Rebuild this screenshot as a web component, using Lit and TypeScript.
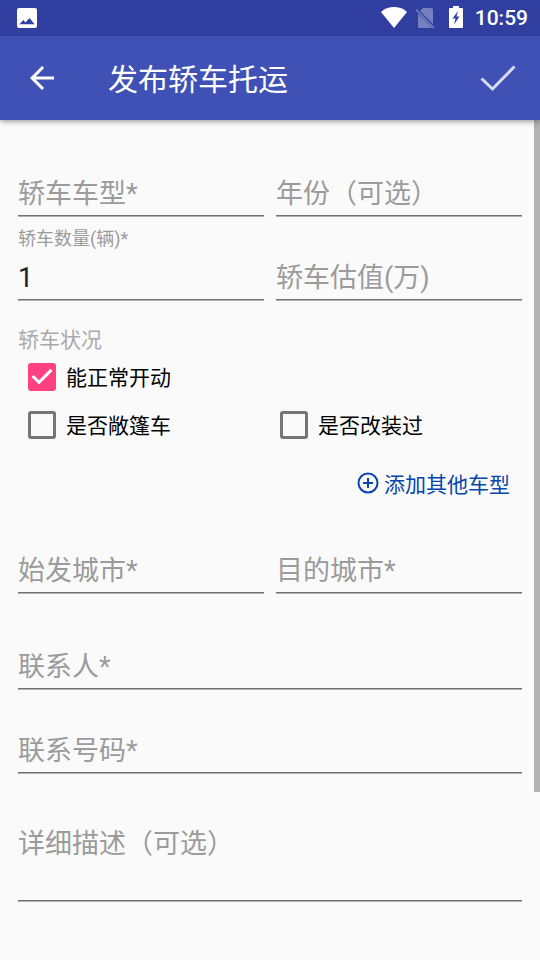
import { LitElement, html, css, svg, nothing } from "lit";
import { customElement, property, state } from "lit/decorators.js";
import { classMap } from "lit/directives/class-map.js";

@customElement("text-field")
class TextField extends LitElement {
  @property() label = "";
  @property() value = "";
  @property({ type: Boolean }) multiline = false;

  static styles = css`
    :host {
      display: block;
      min-width: 0;
    }
    .field {
      display: grid;
      grid-template-rows: 30px auto 2px;
      padding-top: 6px;
    }
    .label {
      grid-area: 2 / 1;
      z-index: 1;
      font-size: 27px;
      line-height: 50px;
      height: 46px;
      color: #9b9b9b;
      white-space: nowrap;
      pointer-events: none;
    }
    .label.multiline {
      padding-top: 18px;
      line-height: 32px;
    }
    .label.floating {
      grid-area: 1 / 1;
      height: 30px;
      font-size: 18px;
      line-height: 32px;
    }
    .control {
      grid-area: 2 / 1;
      box-sizing: border-box;
      width: 100%;
      height: 46px;
      margin: 0;
      padding: 4px 0 0;
      border: 0;
      outline: 0;
      background: none;
      font: inherit;
      font-size: 27px;
      color: #212121;
      resize: none;
    }
    .control.multiline {
      height: 90px;
      padding: 18px 0;
      line-height: 32px;
    }
    .line {
      grid-area: 3 / 1;
      background: linear-gradient(#727272 50%, #b0b0b0 50%);
    }
  `;

  private onInput(e: Event) {
    this.value = (e.target as HTMLInputElement).value;
  }

  render() {
    const cls = { multiline: this.multiline };
    return html`
      <div class="field">
        <label class=${classMap({ label: true, floating: this.value !== "", ...cls })} for="control">${this.label}</label>
        ${this.multiline
          ? html`<textarea id="control" class="control multiline" .value=${this.value} @input=${this.onInput}></textarea>`
          : html`<input id="control" class="control" type="text" .value=${this.value} @input=${this.onInput} />`}
        <div class="line"></div>
      </div>
    `;
  }
}

@customElement("check-option")
class CheckOption extends LitElement {
  @property() label = "";
  @property({ type: Boolean }) checked = false;

  static styles = css`
    .option {
      display: inline-flex;
      align-items: center;
      gap: 10px;
      height: 48px;
      padding-left: 10px;
      font-size: 21px;
      color: #000;
    }
    .mark {
      display: grid;
      place-items: center;
    }
    .box {
      grid-area: 1 / 1;
      appearance: none;
      box-sizing: border-box;
      width: 28px;
      height: 28px;
      margin: 0;
      border: 3px solid #757575;
      border-radius: 3px;
    }
    .box:checked {
      border-color: #ff4081;
      background: #ff4081;
    }
    .tick {
      grid-area: 1 / 1;
      width: 36px;
      height: 36px;
      margin: -4px;
      fill: #fff;
      pointer-events: none;
    }
    .text {
      padding-bottom: 2px;
    }
  `;

  render() {
    return html`
      <label class="option">
        <span class="mark">
          <input class="box" type="checkbox" .checked=${this.checked}
            @change=${(e: Event) => (this.checked = (e.target as HTMLInputElement).checked)} />
          ${this.checked
            ? html`<svg class="tick" viewBox="0 0 24 24" aria-hidden="true">
                <path d="M10 17l-5-5 1.41-1.41L10 14.17l7.59-7.59L19 8z" />
              </svg>`
            : nothing}
        </span>
        <span class="text">${this.label}</span>
      </label>
    `;
  }
}

const photoIcon = svg`<path fill-rule="evenodd" d="M2 0h16a2 2 0 0 1 2 2v16a2 2 0 0 1-2 2H2a2 2 0 0 1-2-2V2a2 2 0 0 1 2-2zM2.500 16.300h15l-5-6.300-4 4.500-2.200-2.500z"/>`;

@customElement("app-root")
class AppRoot extends LitElement {
  @state() private time = "10:59";

  static styles = css`
    :host {
      display: flex;
      flex-direction: column;
      min-height: 100vh;
      background: #fafafa;
      font-family: Roboto, "Noto Sans CJK SC", sans-serif;
    }
    .status {
      display: flex;
      align-items: center;
      height: 36px;
      padding: 0 12px 0 17px;
      background: #303f9f;
      color: #fff;
      fill: #fff;
    }
    .photo {
      width: 20px;
      height: 20px;
      margin-right: auto;
    }
    .wifi {
      width: 26px;
      height: 22px;
      margin-right: 8px;
    }
    .sim {
      width: 20px;
      height: 22px;
      margin-right: 14px;
    }
    .battery {
      width: 14px;
      height: 24px;
      margin-right: 12px;
    }
    .clock {
      font-size: 21px;
      font-weight: 500;
    }
    .bar {
      position: relative;
      z-index: 2;
      display: flex;
      align-items: center;
      height: 84px;
      padding: 0 24px;
      background: #3f51b5;
      box-shadow: 0 1px 6px rgba(0, 0, 0, 0.45);
      clip-path: inset(0 0 -12px);
      color: #fff;
    }
    .icon-button {
      display: flex;
      margin: 0;
      padding: 0;
      border: 0;
      background: none;
    }
    .arrow {
      width: 36px;
      height: 36px;
      fill: #fff;
    }
    .done {
      width: 36px;
      height: 28px;
      fill: none;
      stroke: #d9dcf0;
      stroke-width: 3;
    }
    .title {
      flex: 1;
      margin: 0 0 0 48px;
      padding-bottom: 2px;
      font-size: 30px;
      font-weight: 400;
    }
    .content {
      position: relative;
      flex: 1;
      padding: 13px 18px 58px;
    }
    .pair {
      display: grid;
      grid-template-columns: 1fr 1fr;
      column-gap: 12px;
    }
    .group {
      margin: 24px 0 0;
      padding: 0;
      border: 0;
    }
    .legend {
      padding: 2px 0 0;
      font-size: 21px;
      line-height: 26px;
      color: #aaa;
    }
    .checks {
      display: grid;
      grid-template-columns: 1fr 1fr;
    }
    .wide {
      grid-column: 1 / -1;
    }
    .more {
      display: flex;
      justify-content: flex-end;
      margin: 10px 0 3px;
      padding-right: 12px;
    }
    .add {
      display: flex;
      align-items: center;
      gap: 5px;
      height: 48px;
      padding: 0;
      border: 0;
      background: none;
      font: inherit;
      font-size: 21px;
      color: #0645ad;
    }
    .plus {
      width: 22px;
      height: 22px;
      fill: none;
      stroke: currentColor;
      stroke-width: 2;
    }
    .stack {
      margin-top: 12px;
    }
    .scrollbar {
      position: absolute;
      top: 0;
      right: 0;
      width: 6px;
      height: 80%;
      background: #b2b2b2;
    }
  `;

  render() {
    return html`
      <div class="status">
        <svg class="photo" viewBox="0 0 20 20" aria-hidden="true">${photoIcon}</svg>
        <svg class="wifi" viewBox="0 0 26 22" aria-hidden="true">
          <path d="M13 21L0 5C3.500 1.800 8 0 13 0s9.500 1.800 13 5z" />
        </svg>
        <svg class="sim" viewBox="0 0 20 22" aria-hidden="true">
          <g fill="#7780bf">
            <path d="M8 1h8.500a1.500 1.500 0 0 1 1.500 1.500V17L5 4z" />
            <path d="M3 6.500L17 20.500a1.500 1.500 0 0 1-.5.5h-12A1.500 1.500 0 0 1 3 19.500z" />
          </g>
          <path d="M1 2.500L19 21" fill="none" stroke="#7780bf" stroke-width="1.500" />
        </svg>
        <svg class="battery" viewBox="0 0 14 24" aria-hidden="true">
          <path fill-rule="evenodd" d="M4 0h6v2h3a1 1 0 0 1 1 1v18a1 1 0 0 1-1 1H1a1 1 0 0 1-1-1V3a1 1 0 0 1 1-1h3zM9 5L3.500 12.500H6.500L5 18.500L10.500 10.500H7.500z" />
        </svg>
        <span class="clock">${this.time}</span>
      </div>
      <header class="bar">
        <button class="icon-button" type="button" aria-label="返回">
          <svg class="arrow" viewBox="0 0 24 24" aria-hidden="true">
            <path d="M20 11H7.830l5.590-5.590L12 4l-8 8 8 8 1.410-1.410L7.830 13H20z" />
          </svg>
        </button>
        <h1 class="title">发布轿车托运</h1>
        <button class="icon-button" type="button" aria-label="完成">
          <svg class="done" viewBox="0 0 36 28" aria-hidden="true">
            <path d="M1.500 14.500L12.500 25L34.500 2.500" />
          </svg>
        </button>
      </header>
      <main class="content">
        <div class="pair">
          <text-field label="轿车车型*"></text-field>
          <text-field label="年份（可选）"></text-field>
          <text-field label="轿车数量(辆)*" value="1"></text-field>
          <text-field label="轿车估值(万)"></text-field>
        </div>
        <fieldset class="group">
          <legend class="legend">轿车状况</legend>
          <div class="checks">
            <check-option class="wide" label="能正常开动" checked></check-option>
            <check-option label="是否敞篷车"></check-option>
            <check-option label="是否改装过"></check-option>
          </div>
        </fieldset>
        <div class="more">
          <button class="add" type="button">
            <svg class="plus" viewBox="0 0 22 22" aria-hidden="true">
              <circle cx="11" cy="11" r="9.500" />
              <path d="M11 6v10M6 11h10" />
            </svg>
            添加其他车型
          </button>
        </div>
        <div class="pair">
          <text-field label="始发城市*"></text-field>
          <text-field label="目的城市*"></text-field>
        </div>
        <div class="stack">
          <text-field label="联系人*"></text-field>
          <text-field label="联系号码*"></text-field>
          <text-field label="详细描述（可选）" multiline></text-field>
        </div>
        <div class="scrollbar"></div>
      </main>
    `;
  }
}
